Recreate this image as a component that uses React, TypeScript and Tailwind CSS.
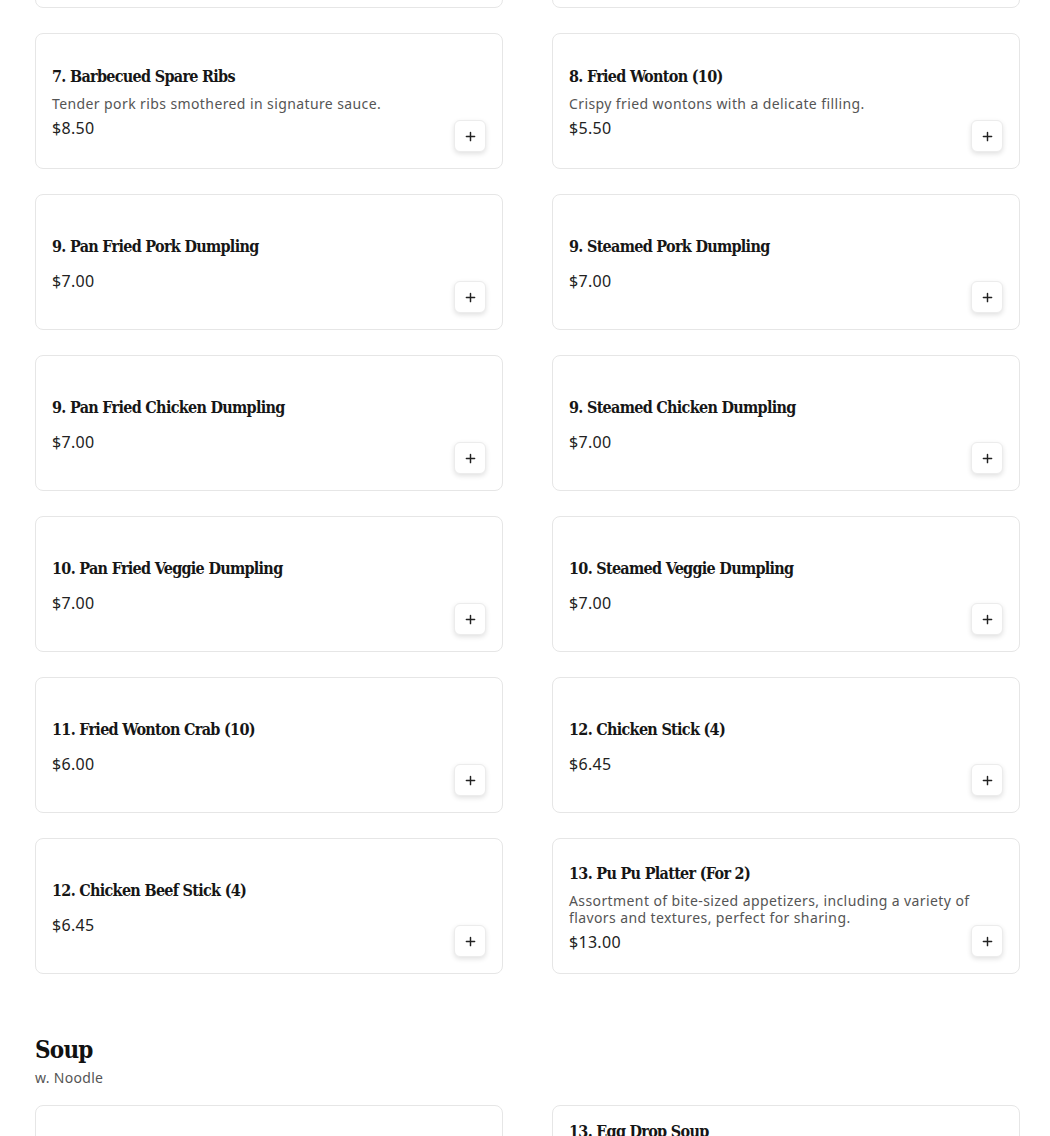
import React from 'react';

type Item = { name: string; desc?: string; price: string };

const rows: Item[][] = [
  [
    { name: '5. Egg Roll (2)', desc: 'Crispy rolls filled with vegetables.', price: '$4.50' },
    { name: '6. Crab Rangoon (6)', desc: 'Cream cheese and crab in a crispy shell.', price: '$6.50' },
  ],
  [
    { name: '7. Barbecued Spare Ribs', desc: 'Tender pork ribs smothered in signature sauce.', price: '$8.50' },
    { name: '8. Fried Wonton (10)', desc: 'Crispy fried wontons with a delicate filling.', price: '$5.50' },
  ],
  [
    { name: '9. Pan Fried Pork Dumpling', price: '$7.00' },
    { name: '9. Steamed Pork Dumpling', price: '$7.00' },
  ],
  [
    { name: '9. Pan Fried Chicken Dumpling', price: '$7.00' },
    { name: '9. Steamed Chicken Dumpling', price: '$7.00' },
  ],
  [
    { name: '10. Pan Fried Veggie Dumpling', price: '$7.00' },
    { name: '10. Steamed Veggie Dumpling', price: '$7.00' },
  ],
  [
    { name: '11. Fried Wonton Crab (10)', price: '$6.00' },
    { name: '12. Chicken Stick (4)', price: '$6.45' },
  ],
  [
    { name: '12. Chicken Beef Stick (4)', price: '$6.45' },
    {
      name: '13. Pu Pu Platter (For 2)',
      desc: 'Assortment of bite-sized appetizers, including a variety of flavors and textures, perfect for sharing.',
      price: '$13.00',
    },
  ],
];

const soup: Item[] = [
  { name: '12. Wonton Soup', price: '$3.50' },
  {
    name: '13. Egg Drop Soup',
    desc: 'Silky egg ribbons in a light, savory chicken broth, finished with scallions, a little sesame oil and a touch of white pepper for warmth.',
    price: '$3.50',
  },
];

const titleFont = "font-['DejaVu_Serif_Condensed','DejaVu_Serif',serif]";
const bodyFont = "font-['Noto_Sans','Liberation_Sans',sans-serif]";

function PlusIcon() {
  return (
    <svg width="11" height="11" viewBox="0 0 12 12" fill="none" stroke="#222" strokeWidth="1.6" strokeLinecap="round">
      <path d="M6 1.5v9M1.5 6h9" />
    </svg>
  );
}

function MenuCard({ item }: { item: Item }) {
  return (
    <div className="relative flex h-[136px] flex-col justify-center rounded-lg border border-[#e6e6e6] bg-white px-4 pt-[3px]">
      <p className={`${titleFont} mb-1.5 text-[16px] font-bold leading-6 tracking-[-0.7px] text-[#161616]`}>
        {item.name}
      </p>
      <p className={`${bodyFont} text-[14px] leading-[17px] tracking-[0.4px] text-[#555]`}>{item.desc}</p>
      <p className={`${bodyFont} mt-[4px] text-[16px] leading-6 tracking-[0.3px] text-[#222]`}>{item.price}</p>
      <button className="absolute bottom-4 right-4 flex h-8 w-8 items-center justify-center rounded-md border border-[#ececec] bg-white shadow-[0_2px_5px_rgba(0,0,0,0.12)]">
        <PlusIcon />
      </button>
    </div>
  );
}

export default function App() {
  return (
    <div className={`min-h-[1136px] overflow-hidden bg-white pl-[35px] pr-[30px] ${bodyFont}`}>
      <div className="-mt-[128px] grid grid-cols-[468px_468px] gap-x-[49px] gap-y-[25px]">
        {rows.flat().map((item) => (
          <MenuCard key={item.name} item={item} />
        ))}
      </div>

      <section className="mt-[60px]">
        <h2 className={`${titleFont} text-[24px] font-bold leading-8 tracking-[-0.8px] text-[#111]`}>Soup</h2>
        <p className="mt-0.5 text-[14px] leading-5 tracking-[0.3px] text-[#555]">w. Noodle</p>
        <div className="mt-[17px] grid grid-cols-[468px_468px] gap-x-[49px] gap-y-[25px]">
          {soup.map((item) => (
            <MenuCard key={item.name} item={item} />
          ))}
        </div>
      </section>
    </div>
  );
}
